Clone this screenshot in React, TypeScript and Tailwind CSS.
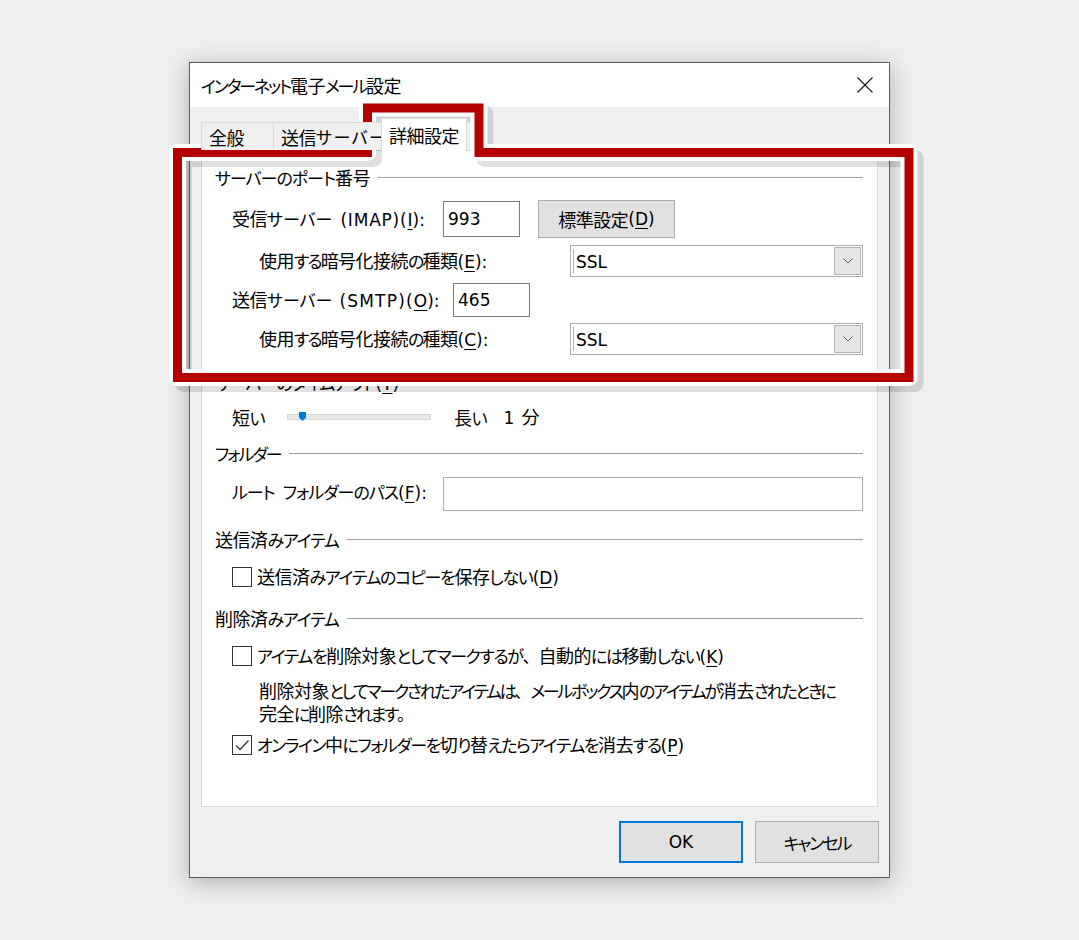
import React from "react";

function T({ s, k = "tracking-[-2px]" }: { s: string; k?: string }) {
  const parts = s.match(/[\u4e00-\u9fff]+|[、。]+| +|[^\u4e00-\u9fff、。 ]+/g) || [];
  return (
    <>
      {parts.map((p, i) => {
        if (/[\u4e00-\u9fff]/.test(p))
          return (
            <span key={i} className="text-[18px] tracking-[-0.5px]">
              {p}
            </span>
          );
        if (/[、。]/.test(p))
          return (
            <span key={i} className="text-[17px] tracking-[-1px] [font-feature-settings:normal]">
              {p}
            </span>
          );
        if (/ /.test(p)) return <span key={i} className="inline-block w-[8px]" />;
        return (
          <span key={i} className={"text-[17px] " + k}>
            {p}
          </span>
        );
      })}
    </>
  );
}

function L({ children }: { children: React.ReactNode }) {
  return <span className="font-['DejaVu_Sans',sans-serif] text-[17px] tracking-normal">{children}</span>;
}

function U({ c }: { c: string }) {
  return <span className="underline underline-offset-[3px] decoration-1">{c}</span>;
}

function Header({ s, k, cls }: { s: string; k?: string; cls: string }) {
  return (
    <div className={"flex items-center h-[24px] " + cls}>
      <span className="whitespace-nowrap leading-[24px]">
        <T s={s} k={k} />
      </span>
      <div className="flex-1 h-px bg-[#a0a0a0] ml-[8px] mr-[14px]" />
    </div>
  );
}

function Select() {
  return (
    <div className="w-[293px] h-[32px] border border-[#adadad] bg-white flex items-center">
      <div className="w-px h-[24px] bg-[#7fb8e6] ml-[2px]" />
      <span className="flex-1 pl-[2px] leading-none">
        <L>SSL</L>
      </span>
      <div className="w-[27px] h-[28px] mr-px bg-[#e6e6e6] border border-[#b5b5b5] flex items-center justify-center">
        <svg width="12" height="8" viewBox="0 0 12 8">
          <path d="M1.5 1.5 L6 6 L10.5 1.5" fill="none" stroke="#606060" strokeWidth="1" />
        </svg>
      </div>
    </div>
  );
}

function Checkbox({ checked }: { checked?: boolean }) {
  return (
    <div className="w-[20px] h-[20px] border border-[#333333] bg-white flex items-center justify-center shrink-0">
      {checked && (
        <svg width="16" height="14" viewBox="0 0 16 14">
          <path d="M2 7.5 L6 11.5 L14.5 2.5" fill="none" stroke="#333333" strokeWidth="1.3" />
        </svg>
      )}
    </div>
  );
}

const FRAME = "M177.5 377.5 L177.5 152.5 L367.5 152.5 L367.5 108 L479 108 L479 152.5 L909 152.5 L909 377.5 Z";

export default function App() {
  return (
    <div className="relative w-[1079px] h-[940px] bg-[#efefef] overflow-hidden font-['Noto_Sans_CJK_JP',sans-serif] text-[18px] text-black [font-feature-settings:'palt']">
      <div className="pl-[189px] pt-[62px]">
        <div className="w-[701px] h-[816px] border border-[#5a5a5a] bg-[#f0f0f0] shadow-[0_4px_22px_rgba(0,0,0,0.28)] flex flex-col">
          {/* title bar */}
          <div className="h-[44px] bg-white flex items-center pl-[11px] pr-[16px]">
            <span className="flex-1 leading-none whitespace-nowrap">
              <T s="インターネット電子メール設定" k="tracking-[-2.2px]" />
            </span>
            <svg width="16" height="16" viewBox="0 0 16 16">
              <path d="M0.5 0.5 L15.5 15.5 M15.5 0.5 L0.5 15.5" stroke="#111" strokeWidth="1.1" />
            </svg>
          </div>
          {/* body */}
          <div className="flex-1 flex flex-col px-[11px]">
            {/* tabs */}
            <div className="mt-[11px] h-[32px] flex items-end relative z-10">
              <div className="w-[72px] h-[28px] border-l border-t border-[#d9d9d9] bg-[#f0f0f0] pl-[7px] flex items-center leading-none whitespace-nowrap">
                <T s="全般" />
              </div>
              <div className="w-[108px] h-[28px] border-l border-t border-[#d9d9d9] bg-[#f0f0f0] pl-[7px] flex items-center leading-none whitespace-nowrap">
                <T s="送信サーバー" k="tracking-[1.5px]" />
              </div>
              <div className="w-[86px] h-[33px] -mb-px border-l border-t border-r border-[#d9d9d9] bg-white pl-[7px] flex items-center leading-none whitespace-nowrap">
                <T s="詳細設定" />
              </div>
            </div>
            {/* panel */}
            <div className="w-[677px] h-[657px] border border-[#d9d9d9] bg-white flex flex-col pl-[13px]">
              <Header s="サーバーのポート番号" k="tracking-[-1px]" cls="mt-[14px]" />

              <div className="mt-[11px] h-[38px] flex items-center pl-[17px]">
                <span className="w-[211px] whitespace-nowrap leading-none">
                  <T s="受信サーバー" k="tracking-[0px]" />
                  <span className="inline-block w-[8px]" />
                  <L>
                    <span className="tracking-[0.8px]">(IMAP)(</span>
                    <U c="I" />
                    ):
                  </L>
                </span>
                <div className="w-[77px] h-[36px] border border-[#7a7a7a] bg-white pl-[4px] pt-[6px] leading-none">
                  <L>993</L>
                </div>
                <div className="ml-[18px] w-[137px] h-[38px] border border-[#adadad] bg-[#e1e1e1] flex items-center justify-center leading-none">
                  <T s="標準設定" />
                  <L>
                    (<U c="D" />)
                  </L>
                </div>
              </div>

              <div className="mt-[7px] h-[32px] flex items-center pl-[44px]">
                <span className="w-[311px] whitespace-nowrap leading-none">
                  <T s="使用する暗号化接続の種類" />
                  <L>
                    (<U c="E" />):
                  </L>
                </span>
                <Select />
              </div>

              <div className="mt-[6px] h-[34px] flex items-center pl-[17px]">
                <span className="w-[221px] whitespace-nowrap leading-none">
                  <T s="送信サーバー" k="tracking-[0px]" />
                  <span className="inline-block w-[7px]" />
                  <L>
                    <span className="tracking-[1.2px]">(SMTP)(</span>
                    <U c="O" />
                    ):
                  </L>
                </span>
                <div className="w-[77px] h-[34px] border border-[#7a7a7a] bg-white pl-[4px] pt-[5px] leading-none">
                  <L>465</L>
                </div>
              </div>

              <div className="mt-[6px] h-[32px] flex items-center pl-[44px]">
                <span className="w-[311px] whitespace-nowrap leading-none">
                  <T s="使用する暗号化接続の種類" />
                  <L>
                    (<U c="C" />):
                  </L>
                </span>
                <Select />
              </div>

              <div className="mt-[16px] h-[24px] flex items-center">
                <span className="whitespace-nowrap leading-[24px]">
                  <T s="サーバーのタイムアウト" k="tracking-[-1px]" />
                  <L>
                    (<U c="T" />)
                  </L>
                </span>
              </div>

              <div className="mt-[10px] h-[24px] flex items-center pl-[17px]">
                <span className="w-[55px] leading-none">
                  <T s="短い" />
                </span>
                <div className="relative w-[144px] h-[6px] bg-[#e7eaea] border border-[#d6d6d6]">
                  <svg width="7" height="9" viewBox="0 0 7 9" className="absolute left-[11px] top-[-3px]">
                    <path d="M0 0 H7 V5.5 L3.5 9 L0 5.5 Z" fill="#0078d7" />
                  </svg>
                </div>
                <span className="ml-[23px] leading-none">
                  <T s="長い" />
                </span>
                <span className="ml-[18px] leading-none whitespace-nowrap">
                  <L>1</L>
                  <span className="inline-block w-[7px]" />
                  <T s="分" />
                </span>
              </div>

              <Header s="フォルダー" cls="mt-[12px]" />

              <div className="mt-[12px] h-[34px] flex items-center pl-[17px]">
                <span className="w-[211px] whitespace-nowrap leading-none -mt-[4px]">
                  <T s="ルート フォルダーのパス" k="tracking-[-1px]" />
                  <L>
                    (<U c="F" />):
                  </L>
                </span>
                <div className="w-[420px] h-[34px] border border-[#adadad] bg-white" />
              </div>

              <Header s="送信済みアイテム" k="tracking-[-1.2px]" cls="mt-[16px]" />

              <div className="mt-[14px] h-[24px] flex items-center pl-[17px] gap-[5px]">
                <Checkbox />
                <span className="whitespace-nowrap leading-none">
                  <T s="送信済みアイテムのコピーを保存しない" k="tracking-[-1.3px]" />
                  <L>
                    (<U c="D" />)
                  </L>
                </span>
              </div>

              <Header s="削除済みアイテム" k="tracking-[-1.2px]" cls="mt-[17px]" />

              <div className="mt-[14px] h-[24px] flex items-center pl-[17px] gap-[5px]">
                <Checkbox />
                <span className="whitespace-nowrap leading-none">
                  <T s="アイテムを削除対象としてマークするが、自動的には移動しない" k="tracking-[-1.4px]" />
                  <L>
                    (<U c="K" />)
                  </L>
                </span>
              </div>

              <div className="mt-[11px] pl-[44px] leading-[22px] whitespace-nowrap">
                <div>
                  <T s="削除対象としてマークされたアイテムは、メールボックス内のアイテムが消去されたときに" k="tracking-[-2.3px]" />
                </div>
                <div>
                  <T s="完全に削除されます。" k="tracking-[-2.3px]" />
                </div>
              </div>

              <div className="mt-[8px] h-[24px] flex items-center pl-[17px] gap-[5px]">
                <Checkbox checked />
                <span className="whitespace-nowrap leading-none">
                  <T s="オンライン中にフォルダーを切り替えたらアイテムを消去する" k="tracking-[-1.5px]" />
                  <L>
                    (<U c="P" />)
                  </L>
                </span>
              </div>
            </div>
            {/* buttons */}
            <div className="mt-[14px] flex justify-end gap-[12px] -mr-px">
              <div className="w-[124px] h-[42px] border-2 border-[#0078d7] bg-[#e1e1e1] flex items-center justify-center leading-none">
                <L>OK</L>
              </div>
              <div className="w-[124px] h-[42px] border border-[#adadad] bg-[#e1e1e1] flex items-center justify-center leading-none whitespace-nowrap">
                <T s="キャンセル" />
              </div>
            </div>
          </div>
        </div>
      </div>

      {/* highlight frame overlay */}
      <svg className="absolute left-0 top-0 pointer-events-none" width="1079" height="940" viewBox="0 0 1079 940">
        <path d={FRAME} transform="translate(6 6)" fill="none" stroke="rgba(0,0,0,0.12)" strokeWidth="17" strokeLinejoin="round" />
        <path d={FRAME} fill="none" stroke="#ffffff" strokeWidth="17" strokeLinejoin="round" />
        <path d={FRAME} fill="none" stroke="#b40000" strokeWidth="9" strokeLinejoin="miter" />
      </svg>
    </div>
  );
}
